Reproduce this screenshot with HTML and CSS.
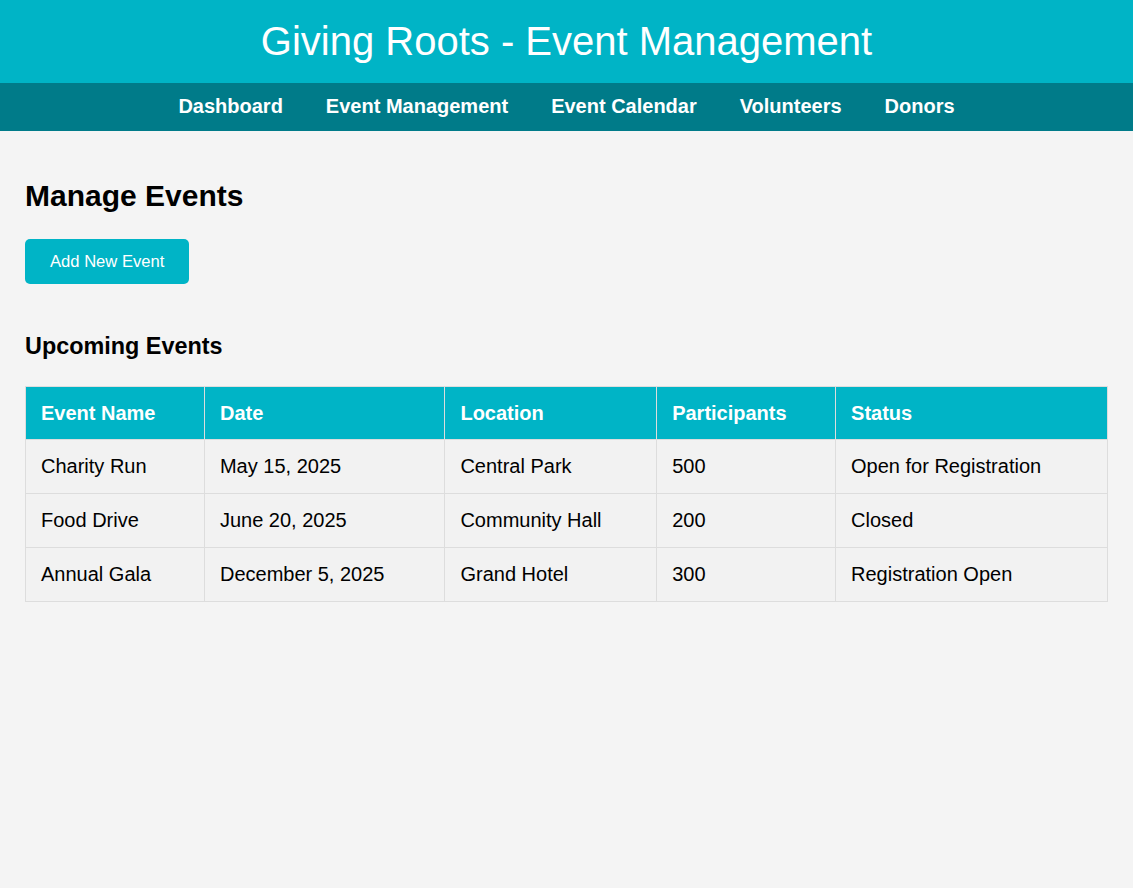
FILE: index.html
```html
<!DOCTYPE html>
<html lang="en">
<head>
<meta charset="utf-8">
<title>Giving Roots - Event Management</title>
<link rel="stylesheet" href="styles.css">
</head>
<body>
<header class="site-header">
  <h1 class="site-title">Giving Roots - Event Management</h1>
</header>
<nav class="site-nav">
  <a href="#" class="nav-link">Dashboard</a>
  <a href="#" class="nav-link">Event Management</a>
  <a href="#" class="nav-link">Event Calendar</a>
  <a href="#" class="nav-link">Volunteers</a>
  <a href="#" class="nav-link">Donors</a>
</nav>
<main class="content">
  <h2 class="page-title">Manage Events</h2>
  <button class="btn-primary" type="button">Add New Event</button>
  <h3 class="section-title">Upcoming Events</h3>
  <table class="events-table">
    <thead>
      <tr>
        <th>Event Name</th>
        <th>Date</th>
        <th>Location</th>
        <th>Participants</th>
        <th>Status</th>
      </tr>
    </thead>
    <tbody>
      <tr>
        <td>Charity Run</td>
        <td>May 15, 2025</td>
        <td>Central Park</td>
        <td>500</td>
        <td>Open for Registration</td>
      </tr>
      <tr>
        <td>Food Drive</td>
        <td>June 20, 2025</td>
        <td>Community Hall</td>
        <td>200</td>
        <td>Closed</td>
      </tr>
      <tr>
        <td>Annual Gala</td>
        <td>December 5, 2025</td>
        <td>Grand Hotel</td>
        <td>300</td>
        <td>Registration Open</td>
      </tr>
    </tbody>
  </table>
</main>
</body>
</html>
```

FILE: styles.css
```css
* { box-sizing: border-box; }

html, body {
  margin: 0;
  padding: 0;
  background: #f4f4f4;
  font-family: "Liberation Sans", Arial, sans-serif;
  color: #000;
}

.site-header {
  background: #00b4c6;
  padding: 19px 0 19px;
  text-align: center;
}

.site-title {
  margin: 0;
  font-size: 40px;
  line-height: 45px;
  font-weight: normal;
  color: #fff;
}

.site-nav {
  background: #007b89;
  display: flex;
  justify-content: center;
  gap: 43px;
  padding: 12px 0 13px;
}

.nav-link {
  color: #fff;
  text-decoration: none;
  font-weight: bold;
  font-size: 20px;
  line-height: 23px;
}

.content {
  padding: 48px 25px 25px;
}

.page-title {
  margin: 0;
  font-size: 30px;
  line-height: 34px;
  font-weight: bold;
}

.btn-primary {
  display: block;
  margin-top: 26px;
  height: 45px;
  padding: 0 25px;
  border: none;
  border-radius: 5px;
  background: #00b4c6;
  color: #fff;
  font-family: inherit;
  font-size: 16.6px;
}

.section-title {
  margin: 49px 0 0;
  font-size: 23.4px;
  line-height: 26px;
  font-weight: bold;
}

.events-table {
  margin-top: 27px;
  width: 100%;
  border-collapse: collapse;
}

.events-table th,
.events-table td {
  border: 1px solid #dddddd;
  padding: 15px;
  text-align: left;
  font-size: 20px;
  line-height: 23px;
}

.events-table th {
  background: #00b4c6;
  color: #fff;
  font-weight: bold;
  padding: 15px 15px 14px;
}

.events-table td {
  background: #f2f2f2;
}
```
